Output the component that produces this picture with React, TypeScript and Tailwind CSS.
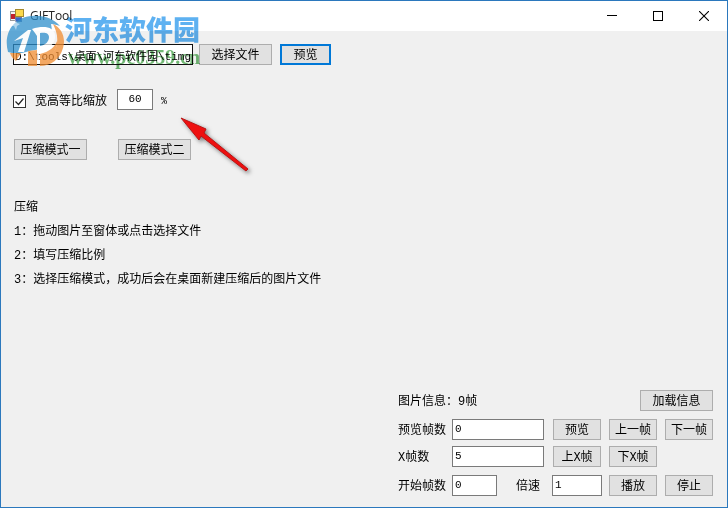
import { useState } from 'react';
import type { ButtonHTMLAttributes, InputHTMLAttributes } from 'react';
import { twMerge } from 'tailwind-merge';

const steps = [
  '1：拖动图片至窗体或点击选择文件',
  '2：填写压缩比例',
  '3：选择压缩模式，成功后会在桌面新建压缩后的图片文件',
];

function Button({ className, ...props }: ButtonHTMLAttributes<HTMLButtonElement>) {
  return (
    <button
      type="button"
      className={twMerge(
        'h-[21px] w-12 shrink-0 border border-[#adadad] bg-[#e1e1e1] pt-[2px] text-center leading-4 whitespace-nowrap',
        className
      )}
      {...props}
    />
  );
}

function TextBox({ className, ...props }: InputHTMLAttributes<HTMLInputElement>) {
  return (
    <input
      type="text"
      className={twMerge(
        'h-[21px] min-w-0 shrink-0 border border-[#7a7a7a] bg-white px-[2px] pb-px text-[11px] leading-4 outline-none',
        className
      )}
      {...props}
    />
  );
}

function AppIcon() {
  return (
    <svg className="size-[14px]" viewBox="0 0 14 14" aria-hidden="true">
      <rect x="0.5" y="2.5" width="5" height="9" fill="#f4f4f4" stroke="#9a9a9a" />
      <rect x="5.5" y="0.5" width="8" height="7" fill="#fbd84b" stroke="#a58a2d" />
      <rect x="1" y="5" width="4" height="5" fill="#c0202b" />
      <rect x="5.5" y="8.5" width="6" height="4" fill="#3868c8" stroke="#6a7ca8" />
    </svg>
  );
}

function TitleBar() {
  return (
    <header className="flex h-[30px] shrink-0 items-center bg-white pl-[9px]">
      <AppIcon />
      <h1 className="flex-1 pl-[6px] font-['Open_Sans','Noto_Sans',sans-serif] text-xs text-[#222]">GIFTool</h1>
      <button type="button" aria-label="最小化" className="flex h-full w-[46px] items-center justify-center">
        <svg className="size-[10px]" viewBox="0 0 10 10" shapeRendering="crispEdges">
          <path d="M0 4.5h10" stroke="#000" />
        </svg>
      </button>
      <button type="button" aria-label="最大化" className="flex h-full w-[46px] items-center justify-center">
        <svg className="size-[10px]" viewBox="0 0 10 10" shapeRendering="crispEdges">
          <rect x="0.5" y="0.5" width="9" height="9" fill="none" stroke="#000" />
        </svg>
      </button>
      <button type="button" aria-label="关闭" className="flex h-full w-[46px] items-center justify-center">
        <svg className="size-[10px]" viewBox="0 0 10 10">
          <path d="M0 0l10 10M10 0L0 10" stroke="#000" strokeWidth="1.1" />
        </svg>
      </button>
    </header>
  );
}

function Watermark() {
  return (
    <div className="pointer-events-none absolute top-[3px] left-px flex select-none">
      <svg className="size-[66px] opacity-75" viewBox="0 0 66 66" aria-hidden="true">
        <path
          d="M6 48C1 30 11 13 30 12c12-1 22 3 28 10-3-1-6-2-9-2 2 9 0 17-6 22-4 3-9 4-15 5l-8 2H10z"
          fill="#2e8fcc"
        />
        <path
          d="M51 20c9 4 13 14 10 24-3 11-12 18-23 18v-7c9-1 16-7 17-16 1-7-1-13-4-19z"
          fill="#f08c30"
        />
        <path d="M26 47l9-1v16h-9z" fill="#f08c30" />
        <path d="M38 50c9-2 15-7 17-13 1 9-6 17-17 18z" fill="#f08c30" />
        <path d="M8 49h11l-5 8c-3-2-5-5-6-8z" fill="#f08c30" />
        <path d="M12 37l14-11h3l-7 22h-6l5-14z" fill="#fff" />
        <path
          d="M30 25c12-4 22-2 23 6 1 9-7 15-16 16v12l-2 1V32l-2-3zM38 29v13c6-1 9-5 9-9 0-4-4-5-9-4z"
          fill="#fff"
          fillRule="evenodd"
        />
        <path d="M9 22l3-3 1-4 2 4 3 1-3 2-1 4-2-4z" fill="#fff" opacity="0.5" />
      </svg>
      <div className="-ml-[3px] flex flex-col pt-[9px]">
        <span className="font-['Noto_Sans_CJK_SC',sans-serif] text-[27px] leading-8 font-black whitespace-nowrap text-[#4da9f0]/90 mix-blend-multiply">
          河东软件园
        </span>
        <span className="pl-[3px] font-['Liberation_Serif',serif] text-[20px] leading-6 font-bold whitespace-nowrap text-[#43a047]/75 mix-blend-multiply">
          www.pc0359.cn
        </span>
      </div>
    </div>
  );
}

function Arrow() {
  return (
    <svg
      className="pointer-events-none absolute top-[114px] left-[177px] h-[60px] w-[76px] drop-shadow-[2px_2px_2px_rgba(0,0,0,0.5)]"
      viewBox="0 0 76 60"
      aria-hidden="true"
    >
      <path d="M3 3l25 11-2 4 44 36-2 2-45-35-2 4z" fill="#ee1010" stroke="#b81414" strokeWidth="1" />
    </svg>
  );
}

export default function App() {
  const [path, setPath] = useState('D:\\tools\\桌面\\河东软件园\\timg');
  const [keepRatio, setKeepRatio] = useState(true);
  const [scale, setScale] = useState('60');
  const [previewFrame, setPreviewFrame] = useState('0');
  const [xFrames, setXFrames] = useState('5');
  const [startFrame, setStartFrame] = useState('0');
  const [speed, setSpeed] = useState('1');

  return (
    <div className="relative flex min-h-screen flex-col border border-[#2b78bd] bg-[#f0f0f0] font-['Liberation_Mono','Noto_Sans_CJK_SC',monospace] text-xs text-black">
      <TitleBar />

      <main className="flex flex-1 flex-col pt-[13px] pr-[14px] pb-[11px] pl-3">
        <div className="flex items-center">
          <TextBox
            aria-label="文件路径"
            className="w-[180px] border-[#111] px-px pb-0"
            value={path}
            onChange={(e) => setPath(e.target.value)}
          />
          <Button className="ml-[6px] w-[73px]">选择文件</Button>
          <Button className="ml-2 w-[51px] border-2 border-[#0078d7]">预览</Button>
        </div>

        <div className="mt-6 flex items-center">
          <label className="flex items-center gap-[9px] pt-1">
            <span className="relative flex size-[13px]">
              <input
                type="checkbox"
                className="size-[13px] appearance-none border border-[#333] bg-white"
                checked={keepRatio}
                onChange={(e) => setKeepRatio(e.target.checked)}
              />
              {keepRatio && (
                <svg className="pointer-events-none absolute inset-0 size-[13px]" viewBox="0 0 13 13">
                  <path d="M2.5 6.5l3 3 5-6" fill="none" stroke="#222" strokeWidth="1.2" />
                </svg>
              )}
            </span>
            宽高等比缩放
          </label>
          <TextBox
            aria-label="缩放比例"
            className="ml-[10px] w-9 text-center"
            value={scale}
            onChange={(e) => setScale(e.target.value)}
          />
          <span className="ml-2 pt-1 text-[10px]">%</span>
        </div>

        <div className="mt-[29px] flex gap-[31px] pl-px">
          <Button className="w-[73px]">压缩模式一</Button>
          <Button className="w-[73px]">压缩模式二</Button>
        </div>

        <section className="mt-9 pl-px leading-6">
          <h2>压缩</h2>
          {steps.map((step) => (
            <p key={step}>{step}</p>
          ))}
        </section>

        <section className="mt-auto flex w-[315px] flex-col self-end">
          <div className="flex items-center justify-between">
            <span className="pt-[2px]">图片信息：9帧</span>
            <Button className="w-[73px]">加载信息</Button>
          </div>
          <div className="mt-2 flex items-center">
            <label htmlFor="preview-frame" className="w-[54px] pt-[2px]">预览帧数</label>
            <TextBox
              id="preview-frame"
              className="w-[92px]"
              value={previewFrame}
              onChange={(e) => setPreviewFrame(e.target.value)}
            />
            <div className="ml-auto flex gap-2">
              <Button>预览</Button>
              <Button>上一帧</Button>
              <Button>下一帧</Button>
            </div>
          </div>
          <div className="mt-[6px] flex items-center">
            <label htmlFor="x-frames" className="w-[54px] pt-[2px]">X帧数</label>
            <TextBox
              id="x-frames"
              className="w-[92px]"
              value={xFrames}
              onChange={(e) => setXFrames(e.target.value)}
            />
            <div className="ml-[9px] flex gap-2">
              <Button>上X帧</Button>
              <Button>下X帧</Button>
            </div>
          </div>
          <div className="mt-2 flex items-center">
            <label htmlFor="start-frame" className="w-[54px] pt-[2px]">开始帧数</label>
            <TextBox
              id="start-frame"
              className="w-[45px]"
              value={startFrame}
              onChange={(e) => setStartFrame(e.target.value)}
            />
            <label htmlFor="speed" className="ml-[19px] w-9 pt-[2px]">倍速</label>
            <TextBox
              id="speed"
              className="w-[50px]"
              value={speed}
              onChange={(e) => setSpeed(e.target.value)}
            />
            <div className="ml-auto flex gap-2">
              <Button>播放</Button>
              <Button>停止</Button>
            </div>
          </div>
        </section>
      </main>

      <Watermark />
      <Arrow />
    </div>
  );
}
